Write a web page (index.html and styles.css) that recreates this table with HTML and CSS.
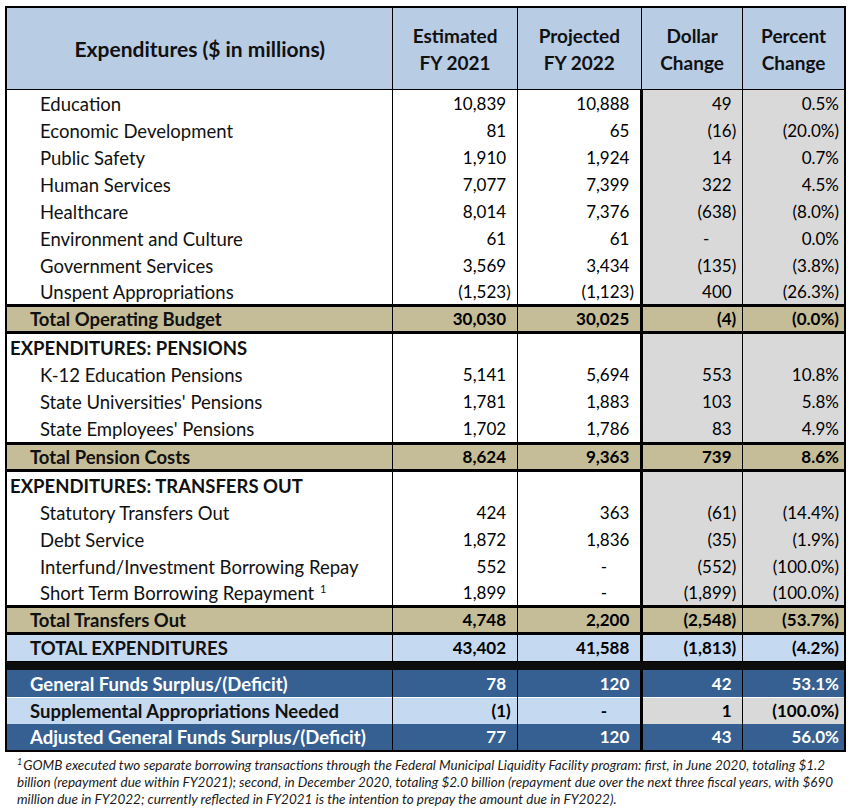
FILE: index.html
```html
<!DOCTYPE html>
<html lang="en">
<head>
<meta charset="utf-8">
<title>Expenditures</title>
<link rel="stylesheet" href="styles.css">
</head>
<body>
<div class="sheet">
<table class="budget">
<colgroup><col class="c1"><col class="c2"><col class="c3"><col class="c4"><col class="c5"></colgroup>
<thead>
<tr class="head">
<th class="h1">Expenditures ($ in millions)</th>
<th>Estimated<br>FY 2021</th>
<th>Projected<br>FY 2022</th>
<th>Dollar<br>Change</th>
<th>Percent<br>Change</th>
</tr>
</thead>
<tbody>
<tr class="row first"><td class="item">Education</td><td class="n pos">10,839</td><td class="n pos">10,888</td><td class="n pos">49</td><td class="pct">0.5%</td></tr>
<tr class="row"><td class="item">Economic Development</td><td class="n pos">81</td><td class="n pos">65</td><td class="n">(16)</td><td class="pct">(20.0%)</td></tr>
<tr class="row"><td class="item">Public Safety</td><td class="n pos">1,910</td><td class="n pos">1,924</td><td class="n pos">14</td><td class="pct">0.7%</td></tr>
<tr class="row"><td class="item">Human Services</td><td class="n pos">7,077</td><td class="n pos">7,399</td><td class="n pos">322</td><td class="pct">4.5%</td></tr>
<tr class="row"><td class="item">Healthcare</td><td class="n pos">8,014</td><td class="n pos">7,376</td><td class="n">(638)</td><td class="pct">(8.0%)</td></tr>
<tr class="row"><td class="item">Environment and Culture</td><td class="n pos">61</td><td class="n pos">61</td><td class="n dash">-</td><td class="pct">0.0%</td></tr>
<tr class="row"><td class="item">Government Services</td><td class="n pos">3,569</td><td class="n pos">3,434</td><td class="n">(135)</td><td class="pct">(3.8%)</td></tr>
<tr class="row short"><td class="item">Unspent Appropriations</td><td class="n">(1,523)</td><td class="n">(1,123)</td><td class="n pos">400</td><td class="pct">(26.3%)</td></tr>
<tr class="total"><td class="tl">Total Operating Budget</td><td class="n pos">30,030</td><td class="n pos">30,025</td><td class="n">(4)</td><td class="pct">(0.0%)</td></tr>
<tr class="row sec"><td class="sl">EXPENDITURES: PENSIONS</td><td></td><td></td><td></td><td></td></tr>
<tr class="row"><td class="item">K-12 Education Pensions</td><td class="n pos">5,141</td><td class="n pos">5,694</td><td class="n pos">553</td><td class="pct">10.8%</td></tr>
<tr class="row"><td class="item">State Universities' Pensions</td><td class="n pos">1,781</td><td class="n pos">1,883</td><td class="n pos">103</td><td class="pct">5.8%</td></tr>
<tr class="row"><td class="item">State Employees' Pensions</td><td class="n pos">1,702</td><td class="n pos">1,786</td><td class="n pos">83</td><td class="pct">4.9%</td></tr>
<tr class="total"><td class="tl">Total Pension Costs</td><td class="n pos">8,624</td><td class="n pos">9,363</td><td class="n pos">739</td><td class="pct">8.6%</td></tr>
<tr class="row sec"><td class="sl">EXPENDITURES: TRANSFERS OUT</td><td></td><td></td><td></td><td></td></tr>
<tr class="row"><td class="item">Statutory Transfers Out</td><td class="n pos">424</td><td class="n pos">363</td><td class="n">(61)</td><td class="pct">(14.4%)</td></tr>
<tr class="row"><td class="item">Debt Service</td><td class="n pos">1,872</td><td class="n pos">1,836</td><td class="n">(35)</td><td class="pct">(1.9%)</td></tr>
<tr class="row"><td class="item">Interfund/Investment Borrowing Repay</td><td class="n pos">552</td><td class="n dash">-</td><td class="n">(552)</td><td class="pct">(100.0%)</td></tr>
<tr class="row short"><td class="item">Short Term Borrowing Repayment <sup class="fn">1</sup></td><td class="n pos">1,899</td><td class="n dash">-</td><td class="n">(1,899)</td><td class="pct">(100.0%)</td></tr>
<tr class="total"><td class="tl">Total Transfers Out</td><td class="n pos">4,748</td><td class="n pos">2,200</td><td class="n">(2,548)</td><td class="pct">(53.7%)</td></tr>
<tr class="grand"><td class="tl">TOTAL EXPENDITURES</td><td class="n pos">43,402</td><td class="n pos">41,588</td><td class="n">(1,813)</td><td class="pct">(4.2%)</td></tr>
<tr class="sep"><td></td><td></td><td></td><td></td><td></td></tr>
<tr class="dark"><td class="tl">General Funds Surplus/(Deficit)</td><td class="n pos">78</td><td class="n pos">120</td><td class="n pos">42</td><td class="pct">53.1%</td></tr>
<tr class="supp"><td class="tl">Supplemental Appropriations Needed</td><td class="n">(1)</td><td class="n dash">-</td><td class="n pos">1</td><td class="pct">(100.0%)</td></tr>
<tr class="dark last"><td class="tl">Adjusted General Funds Surplus/(Deficit)</td><td class="n pos">77</td><td class="n pos">120</td><td class="n pos">43</td><td class="pct">56.0%</td></tr>
</tbody>
</table>
<p class="note"><sup>1</sup>GOMB executed two separate borrowing transactions through the Federal Municipal Liquidity Facility program: first, in June 2020, totaling $1.2<br>billion (repayment due within FY2021); second, in December 2020, totaling $2.0 billion (repayment due over the next three fiscal years, with $690<br>million due in FY2022; currently reflected in FY2021 is the intention to prepay the amount due in FY2022).</p>
</div>
</body>
</html>
```
FILE: styles.css
```css
html, body {
  margin: 0;
  background: #fff;
}
body {
  font-family: Lato, "Liberation Sans", sans-serif;
  color: #000;
}
.sheet {
  padding: 6px 0 0 5px;
}
.budget {
  border-collapse: collapse;
  table-layout: fixed;
  width: 841px;
  font-size: 17px;
  border: 2px solid #000;
}
.c1 { width: 386px; }
.c2 { width: 124px; }
.c3 { width: 124px; }
.c4 { width: 101px; }
.c5 { width: 102px; }

.head th {
  background: #b8cce4;
  font-weight: 700;
  font-size: 19px;
  line-height: 27px;
  height: 81px;
  padding: 0;
  text-align: center;
  border: 1px solid #000;
  border-top: 2px solid #000;
  color: #111;
}
.head th.h1 { font-size: 21px; }
.head th:last-child { border-right: 1px solid #8a8a8a; }

.budget td {
  height: 27px;
  padding: 0 6px 0 0;
  line-height: 20px;
  white-space: nowrap;
  border-left: 1px solid #000;
  border-right: 1px solid #000;
  vertical-align: middle;
}
.budget tbody td:nth-child(4) { border-left: 3px solid #000; }
.budget tbody td:last-child { border-right: 2px solid #000; }

.row td:nth-child(4),
.row td:nth-child(5) { background: #d9d9d9; }
.row.short td { height: 25px; }

.item, .tl, .sl { font-size: 18.5px; color: #111; }
.item { padding-left: 33px !important; }
.tl { padding-left: 23px !important; font-weight: 700; }
.sl { padding-left: 3px !important; font-weight: 700; }

.n, .pct { text-align: right; }
.pct { padding-right: 5px !important; }
.pos::after { content: ")"; visibility: hidden; }
.dash { padding-right: 33px !important; }

.fn {
  font-size: 11px;
  line-height: 0;
  vertical-align: 7px;
  margin-left: 1px;
}

.total td {
  background: #c4bd97;
  font-weight: 700;
  border-top: 3px solid #000;
  border-bottom: 3px solid #000;
  height: 24px;
}
.grand td {
  background: #c5d9f1;
  font-weight: 700;
  border-bottom: 1px solid #000;
  height: 26px;
}
.sep td {
  height: 8px;
  padding: 0;
  background: #0d0d0d;
  border-left: 0;
  border-right: 0;
  line-height: 0;
}
.budget tbody .sep td:nth-child(4) { border-left: 3px solid #0d0d0d; }
.dark td {
  background: #366092;
  color: #fff;
  font-weight: 700;
  height: 27px;
}
.dark .tl { color: #fff; }
.supp td {
  background: #c5d9f1;
  font-weight: 700;
  border-top: 1px solid #fff;
  height: 26px;
}
.supp td:nth-child(4),
.supp td:nth-child(5) { background: #d9d9d9; }
.last td { border-bottom: 2px solid #000; height: 26px; }

.note {
  margin: 5px 0 0 12px;
  font-style: italic;
  font-size: 13.5px;
  line-height: 17px;
  color: #1a1a1a;
  white-space: nowrap;
}
.note sup {
  font-size: 9px;
  line-height: 0;
  vertical-align: 5px;
  margin-right: 1px;
}
```
